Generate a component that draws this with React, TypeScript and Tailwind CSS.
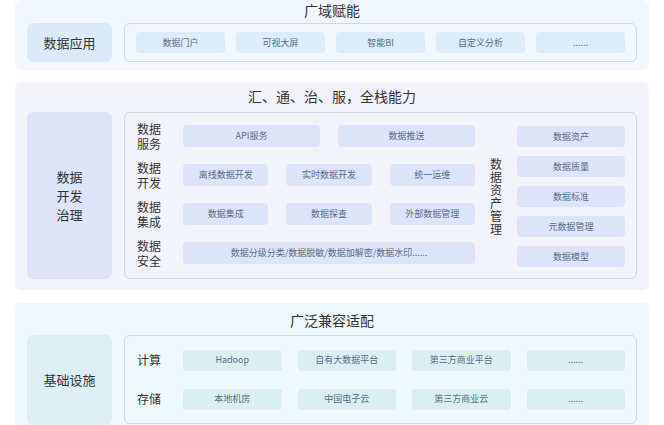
export default function App() {
  const font = { fontFamily: '"Noto Sans CJK SC", "Noto Sans", sans-serif' };
  const chip = "flex items-center justify-center text-[9px] text-[#5a6b84] rounded-sm";
  return (
    <div className="w-[664px] h-[425px] bg-white overflow-hidden text-[#333]" style={font}>
      {/* section 1 */}
      <div className="mx-[15px] h-[70px] bg-[#f1f7fd] rounded-md pt-[1px]">
        <div className="text-center text-[14px] leading-[18px] text-[#333]">广域赋能</div>
        <div className="flex mt-[4px] px-[12px] gap-[12px]">
          <div className="w-[85px] h-[39px] bg-[#dbeaf8] rounded-md flex items-center justify-center text-[13px]">数据应用</div>
          <div className="flex-1 h-[39px] border border-[#c9dbe6] rounded-md flex items-center px-[11px] gap-[11px]">
            {["数据门户", "可视大屏", "智能BI", "自定义分析", "......"].map(t => (
              <div key={t} className={`${chip} flex-1 h-[21px] bg-[#dcecf9]`}>{t}</div>
            ))}
          </div>
        </div>
      </div>
      {/* section 2 */}
      <div className="mx-[15px] mt-[12px] h-[208px] bg-[#f3f4fb] rounded-md pt-[4px]">
        <div className="text-center text-[14px] leading-[20px]">汇、通、治、服，全栈能力</div>
        <div className="flex mt-[6px] px-[12px] gap-[12px]">
          <div className="w-[85px] h-[167px] bg-[#dde3f8] rounded-md flex items-center justify-center text-[13px] leading-[19px] text-center">数据<br />开发<br />治理</div>
          <div className="flex-1 h-[167px] border border-[#d3d7e6] rounded-md flex pl-[12px] pr-[11px] pt-[12px]">
            <div className="w-[338px] flex flex-col gap-[17px]">
              {[
                { l: "数据服务", c: ["API服务", "数据推送"] },
                { l: "数据开发", c: ["离线数据开发", "实时数据开发", "统一运维"] },
                { l: "数据集成", c: ["数据集成", "数据探查", "外部数据管理"] },
                { l: "数据安全", c: ["数据分级分类/数据脱敏/数据加解密/数据水印......"] },
              ].map(r => (
                <div key={r.l} className="flex items-center h-[22px]">
                  <div className="w-[46px] text-[12px] leading-[15px]">{r.l.slice(0, 2)}<br />{r.l.slice(2)}</div>
                  <div className="flex-1 flex gap-[18px]">
                    {r.c.map(t => (
                      <div key={t} className={`${chip} flex-1 h-[22px] bg-[#dde4fa]`}>{t}</div>
                    ))}
                  </div>
                </div>
              ))}
            </div>
            <div className="w-[42px] flex flex-col items-center justify-center text-[12px] leading-[13px] mt-[-12px]">
              {["数", "据", "资", "产", "管", "理"].map(c => <span key={c} className="block h-[13px]">{c}</span>)}
            </div>
            <div className="flex-1 flex flex-col gap-[9px] mt-[1px]">
              {["数据资产", "数据质量", "数据标准", "元数据管理", "数据模型"].map(t => (
                <div key={t} className={`${chip} h-[21px] bg-[#dde4fa]`}>{t}</div>
              ))}
            </div>
          </div>
        </div>
      </div>
      {/* section 3 */}
      <div className="mx-[15px] mt-[13px] h-[140px] bg-[#eff9fb] rounded-md pt-[8px]">
        <div className="text-center text-[14px] leading-[18px]">广泛兼容适配</div>
        <div className="flex mt-[6px] px-[12px] gap-[12px]">
          <div className="w-[85px] h-[90px] bg-[#dcf0f4] rounded-md flex items-center justify-center text-[13px]">基础设施</div>
          <div className="flex-1 h-[89px] border border-[#bfdde2] rounded-md flex flex-col justify-center gap-[18px] pl-[12px] pr-[11px]">
            {[
              { l: "计算", c: ["Hadoop", "自有大数据平台", "第三方商业平台", "......"] },
              { l: "存储", c: ["本地机房", "中国电子云", "第三方商业云", "......"] },
            ].map(r => (
              <div key={r.l} className="flex items-center">
                <div className="w-[46px] text-[12px]">{r.l}</div>
                <div className="flex-1 flex gap-[16px]">
                  {r.c.map((t, i) => (
                    <div key={i} className={`${chip} flex-1 h-[21px] bg-[#daeff2]`}>{t}</div>
                  ))}
                </div>
              </div>
            ))}
          </div>
        </div>
      </div>
    </div>
  );
}
